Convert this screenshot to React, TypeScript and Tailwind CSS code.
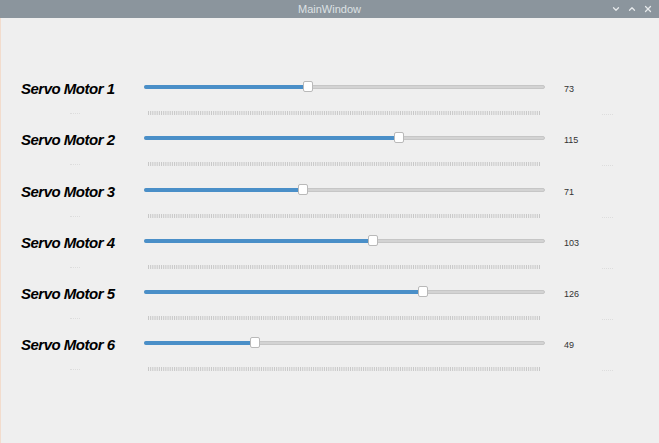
import { ChevronDown, ChevronUp, X } from 'lucide-react';

interface Servo {
  id: number;
  value: number;
}

const servos: Servo[] = [
  { id: 1, value: 73 },
  { id: 2, value: 115 },
  { id: 3, value: 71 },
  { id: 4, value: 103 },
  { id: 5, value: 126 },
  { id: 6, value: 49 },
];

const MAX = 180;

// tick marks under each slider, one per unit
function Ticks() {
  const ticks = Array.from({ length: MAX + 1 });
  return (
    <svg width="401" height="4" className="block">
      {ticks.map((_, i) => {
        const x = 4.5 + (i * 391) / MAX;
        return <line key={i} x1={x} x2={x} y1="0" y2="4" stroke="#bdbdbd" strokeWidth="0.8" />;
      })}
    </svg>
  );
}

function ServoRow({ servo }: { servo: Servo }) {
  const pos = 5 + (servo.value * 391) / MAX;
  return (
    <div className="flex h-[51.3px] items-start">
      <div className="relative w-[144px] pl-[21px]">
        <div className="text-[15px] leading-[18px] font-bold italic text-black tracking-[-0.5px]">
          Servo Motor {servo.id}
        </div>
        <div className="absolute left-[70px] top-[33px] w-[10px] border-t border-dotted border-[#dddddd]" />
      </div>
      <div className="w-[401px] pt-[1px]">
        <div className="relative h-[12px]">
          <div className="absolute left-0 right-0 top-[4px] h-[4px] rounded-full bg-[#d3d3d3] border border-[#c6c6c6]" />
          <div
            className="absolute left-0 top-[4px] h-[4px] rounded-full bg-[#4a8fc8]"
            style={{ width: pos }}
          />
          <div
            className="absolute top-0 h-[11px] w-[10px] rounded-[2px] bg-white border border-[#b9b9b9]"
            style={{ left: pos - 5 }}
          />
        </div>
        <div className="mt-[18px]">
          <Ticks />
        </div>
      </div>
      <div className="relative pl-[19px] pt-[3px] text-[9px] leading-[12px] text-[#333] font-['Liberation_Sans',sans-serif]">
        {servo.value}
        <div className="absolute left-[57px] top-[34px] w-[11px] border-t border-dotted border-[#dddddd]" />
      </div>
    </div>
  );
}

export default function App() {
  return (
    <div className="w-[659px] h-[443px] overflow-hidden bg-[#efefef] font-['Liberation_Sans',Arial,sans-serif]">
      <div className="relative flex h-[18px] items-center justify-center bg-[#8b959d]">
        <span className="text-[11px] text-[#dde1e4]">MainWindow</span>
        <div className="absolute right-[6px] top-0 flex h-full items-center gap-[6px] text-[#e6e9eb]">
          <ChevronDown size={10} strokeWidth={3} />
          <ChevronUp size={10} strokeWidth={3} />
          <X size={10} strokeWidth={3} />
        </div>
      </div>
      <div className="h-[425px] shadow-[inset_1px_0_#f2dccd] pt-[62px]">
        {servos.map((s) => (
          <ServoRow key={s.id} servo={s} />
        ))}
      </div>
    </div>
  );
}
